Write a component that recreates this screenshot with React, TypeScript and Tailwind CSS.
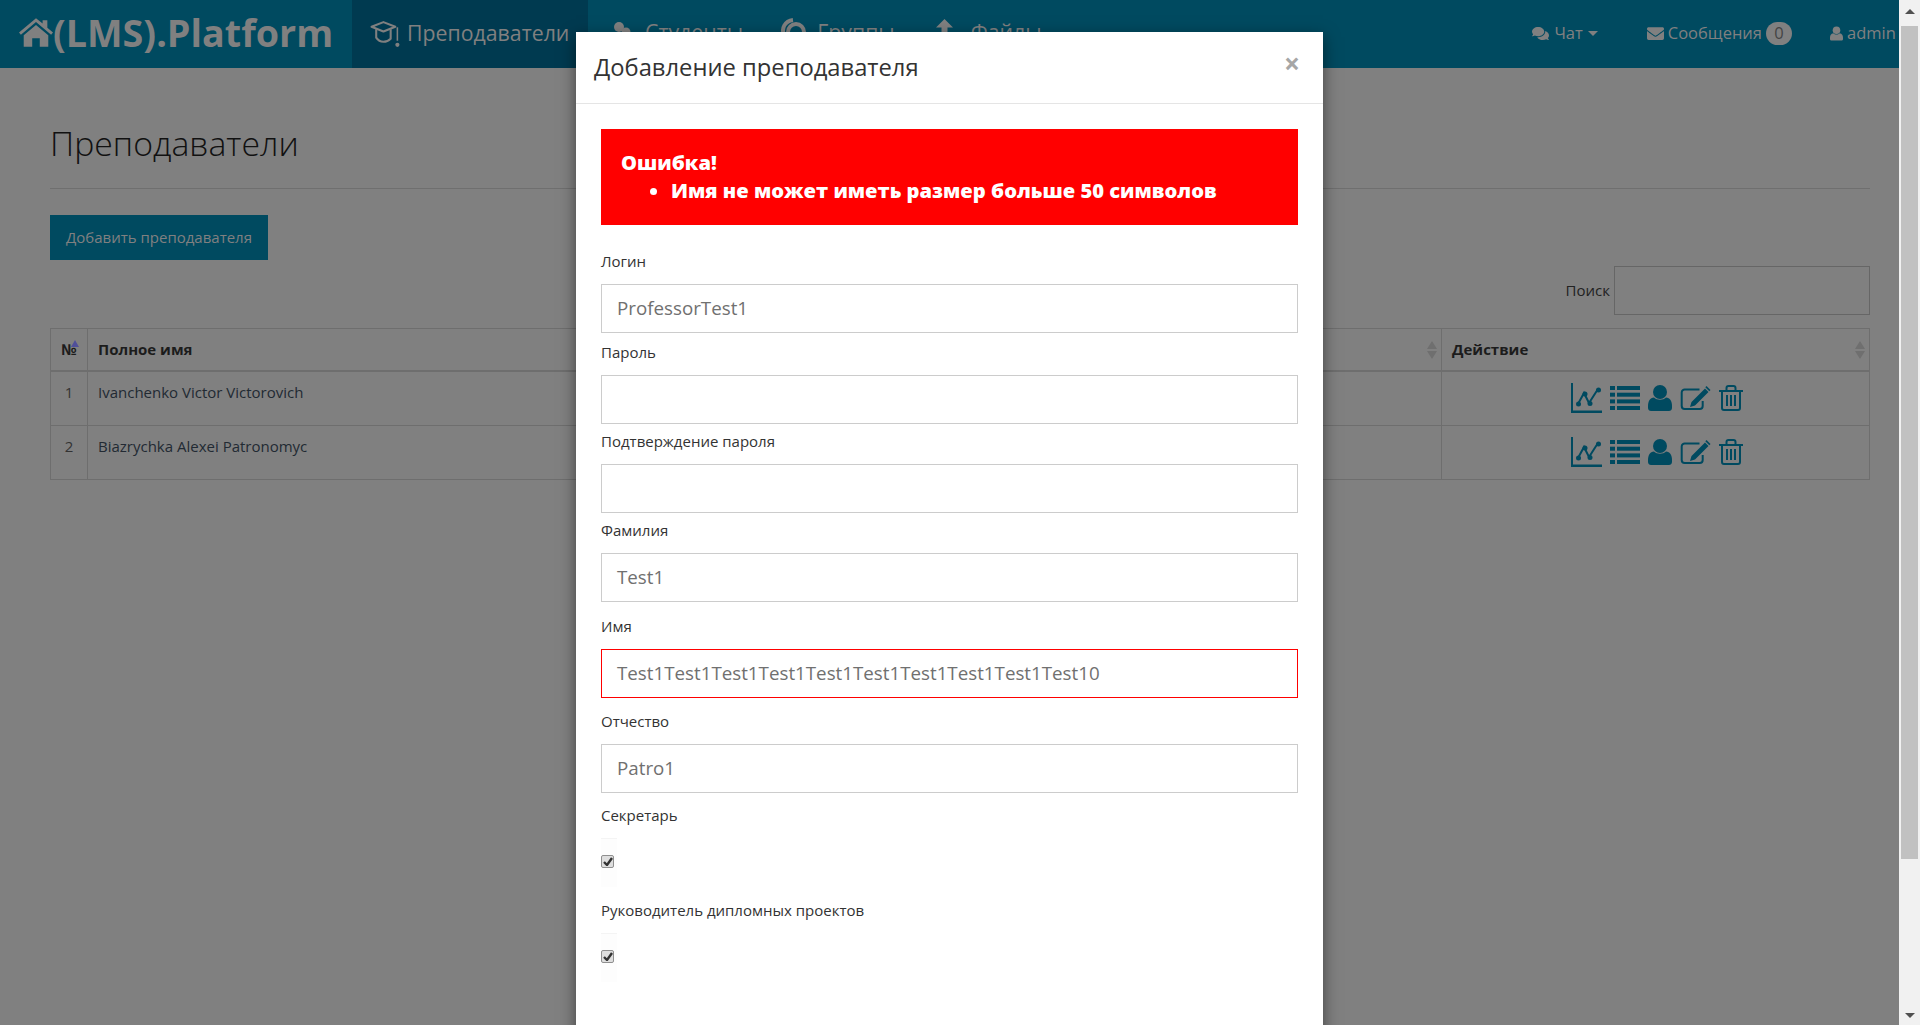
import React from "react";
import { FaComments, FaEnvelope } from "react-icons/fa";

const teal = "#004a60";

function ChartIcon() {
  return (
    <svg width="31" height="30" viewBox="0 0 31 30" className="shrink-0">
      <path d="M0 0h2v27.5h29V30H0z" fill={teal} />
      <path d="M7 21l6-11 5 10 9-14" fill="none" stroke={teal} strokeWidth="2" />
      <circle cx="7.5" cy="21" r="2.5" fill={teal} />
      <circle cx="14" cy="11" r="2.5" fill={teal} />
      <circle cx="19" cy="20.5" r="2.5" fill={teal} />
      <circle cx="27.5" cy="7" r="2.5" fill={teal} />
    </svg>
  );
}
function ListIcon() {
  return (
    <svg width="30" height="24" viewBox="0 0 30 24" className="shrink-0" fill={teal}>
      <rect x="0" y="0" width="5" height="4" />
      <rect x="7" y="0" width="23" height="4" />
      <rect x="0" y="6.7" width="5" height="4" />
      <rect x="7" y="6.7" width="23" height="4" />
      <rect x="0" y="13.4" width="5" height="4" />
      <rect x="7" y="13.4" width="23" height="4" />
      <rect x="0" y="20" width="5" height="4" />
      <rect x="7" y="20" width="23" height="4" />
    </svg>
  );
}
function UserIcon({ w = 24, h = 26, c = teal, cls = "shrink-0" }: { w?: number; h?: number; c?: string; cls?: string }) {
  return (
    <svg width={w} height={h} viewBox="0 0 24 26" className={cls} fill={c}>
      <circle cx="12" cy="7" r="7" />
      <path d="M6 12.5c3 3 9 3 12 0 4 .5 6 3.500 6 8.500v2c0 2-1.500 3-3 3H3c-1.500 0-3-1-3-3v-2c0-5 2-8 6-8.500z" />
    </svg>
  );
}
function EditIcon() {
  return (
    <svg width="31" height="24" viewBox="0 0 30 24" className="shrink-0">
      <path d="M19 3.500H4.500A3 3 0 0 0 1.200 6.500v13.500a3 3 0 0 0 3 3h15a3 3 0 0 0 3-3v-5" fill="none" stroke={teal} strokeWidth="2" />
      <path d="M24.500 2.500L11 16l-1.500 5 5-1.500L28 6zM26 0l4 4-1.200 1.200-4-4z" fill={teal} />
    </svg>
  );
}
function TrashIcon() {
  return (
    <svg width="24" height="26" viewBox="0 0 24 26" className="shrink-0" fill="none" stroke={teal} strokeWidth="2">
      <path d="M0 6h24" />
      <path d="M3 6v17a2 2 0 0 0 2 2h14a2 2 0 0 0 2-2V6" />
      <path d="M7.500 5.500V3a2 2 0 0 1 2-2h5a2 2 0 0 1 2 2v2.500" />
      <path d="M8 10v11M12 10v11M16 10v11" />
    </svg>
  );
}
function HomeIcon() {
  return (
    <svg width="34" height="29" viewBox="0 0 36 30" fill="#808080" className="shrink-0">
      <path d="M18 0L0 15l2 2.500L18 4l16 13.500 2-2.500-6-5V2h-5v3.500z" />
      <path d="M18 7L5 18v12h9v-9h8v9h9V18z" />
    </svg>
  );
}
function CapIcon() {
  return (
    <svg width="31" height="27" viewBox="0 0 30 26" fill="none" stroke="#808080" strokeWidth="2" className="shrink-0">
      <path d="M13 2L1.500 6.500 13 11l11.500-4.500z" strokeLinejoin="round" />
      <path d="M6 9v8c2 3 4 4 7 4s5-1 7-3V9" />
      <circle cx="26.500" cy="24" r="2" fill="#808080" stroke="none" />
      <path d="M26.500 7v13" strokeWidth="1.500" />
    </svg>
  );
}
function SortArrows() {
  return (
    <span className="absolute right-[4px] top-[12px] flex flex-col gap-[2px]">
      <span className="w-0 h-0 border-x-[5px] border-x-transparent border-b-[8px] border-b-[#6f6f6f]" />
      <span className="w-0 h-0 border-x-[5px] border-x-transparent border-t-[8px] border-t-[#6f6f6f]" />
    </span>
  );
}
function ActionIcons() {
  return (
    <div className="flex items-center justify-center gap-[8px] h-[30px] ml-[2px]">
      <ChartIcon />
      <ListIcon />
      <UserIcon />
      <EditIcon />
      <TrashIcon />
    </div>
  );
}
function Row({ n, name }: { n: number; name: string }) {
  return (
    <div className="flex h-[54px] border-b border-[#6e6e6e] leading-[20px]">
      <div className="w-[37px] border-r border-[#6e6e6e] text-center pt-[10px] text-[#333]">{n}</div>
      <div className="flex-1 px-[10px] pt-[10px] text-[#222a33]">{name}</div>
      <div className="w-[428px] border-l border-[#6e6e6e] pt-[11px]">
        <ActionIcons />
      </div>
    </div>
  );
}
function Field({ label, value, top, error }: { label: string; value: string; top: string; error?: boolean }) {
  return (
    <div className={top}>
      <label className="block text-[15px] leading-[20px] text-[#333] mb-[13px]">{label}</label>
      <div
        className={`h-[49px] border px-[15px] flex items-center text-[18.75px] text-[#707070] ${error ? "border-[#ff0000]" : "border-[#ccc]"}`}
      >
        {value}
      </div>
    </div>
  );
}
function Check({ label, top }: { label: string; top: string }) {
  return (
    <div className={top}>
      <div className="text-[15px] leading-[20px] text-[#333]">{label}</div>
      <div className="mt-[13px] w-[16px] h-[49px] border-t border-[#f4f4f4] bg-[#fdfdfd] pt-[16px]">
        <span className="w-[13px] h-[13px] rounded-[2px] border border-[#8f8f8f] bg-[#dedede] flex items-center justify-center">
          <svg width="10" height="9" viewBox="0 0 10 9">
            <path d="M1 5l3 3 5-7" fill="none" stroke="#333" strokeWidth="2.400" />
          </svg>
        </span>
      </div>
    </div>
  );
}

export default function App() {
  return (
    <div className="flex h-[1025px] w-[1920px] overflow-hidden bg-[#808080] text-[15px] font-['Open_Sans',sans-serif] relative">
      <div className="w-[1899px] shrink-0 relative">
        <header className="h-[68px] bg-[#004a60] flex items-center text-[#808080] overflow-hidden">
          <div className="flex items-center pl-[19px] w-[352px] font-bold text-[37.7px] whitespace-nowrap pb-[2px]">
            <HomeIcon />
            <span>(LMS).Platform</span>
          </div>
          <div className="h-[68px] w-[236px] bg-[#003a50] flex items-center pl-[18px] gap-[6px] text-[21.3px] pb-[2px]">
            <CapIcon />
            <span>Преподаватели</span>
          </div>
          <div className="flex items-center text-[21.3px] ml-[25px] pb-[4px]">
            <svg width="18" height="20" viewBox="0 0 18 20" fill="#808080" className="shrink-0"><circle cx="6" cy="5" r="5" /><circle cx="13" cy="10" r="4.500" /><path d="M0 18c0-5 3-7 6-7s6 2 6 7zM10 18c0-4 2-5 4-5s4 1 4 5z" /></svg>
            <span className="ml-[14px]">Студенты</span>
            <svg width="26" height="26" viewBox="0 0 26 26" fill="none" stroke="#808080" strokeWidth="4" className="shrink-0 ml-[38px] mb-[2px]"><circle cx="15" cy="14" r="8" /><path d="M3 18C0 10 4 3 12 2" /></svg>
            <span className="ml-[10px]">Группы</span>
            <svg width="17" height="26" viewBox="0 0 17 26" fill="#808080" className="shrink-0 ml-[41px]"><path d="M8.500 0L17 8.500h-5.500V26h-6V8.500H0z" /></svg>
            <span className="ml-[18px]">Файлы</span>
          </div>
          <div className="flex-1 flex items-center justify-end h-full text-[16.5px] pb-[2px]">
            <span className="flex items-center mr-[49px]">
              <FaComments size={17} color="#808080" className="mr-[5px]" />
              Чат
              <span className="ml-[5px] w-0 h-0 border-x-[5px] border-x-transparent border-t-[5px] border-t-[#808080]" />
            </span>
            <span className="flex items-center mr-[38px]">
              <FaEnvelope size={17} color="#808080" className="mr-[4px]" />
              Сообщения
              <span className="ml-[4px] w-[26px] h-[23px] rounded-[12px] bg-[#808080] text-[#444] flex items-center justify-center">0</span>
            </span>
            <span className="flex items-center gap-[4px] w-[69px] whitespace-nowrap overflow-hidden">
              <UserIcon w={13} h={15} c="#808080" />
              admin
              <span className="shrink-0 ml-[3px] w-0 h-0 border-x-[5px] border-x-transparent border-t-[5px] border-t-[#808080]" />
            </span>
          </div>
        </header>

        <main className="pl-[50px] pr-[29px]">
          <h1 className="mt-[57px] text-[33.8px] leading-[36px] text-[#111] font-light border-b border-[#6f6f6f] pb-[27px]">Преподаватели</h1>
          <button className="mt-[26px] h-[45px] w-[218px] bg-[#004a60] text-[#808080] text-[15px] block">Добавить преподавателя</button>
          <div className="mt-[6px] h-[49px] flex justify-end items-center gap-[4px]">
            <span className="text-[#222]">Поиск</span>
            <div className="w-[256px] h-[49px] border border-[#666]" />
          </div>
          <div className="mt-[13px] border-x border-t border-[#6e6e6e]">
            <div className="flex h-[43px] border-b-2 border-[#6e6e6e] font-bold text-[#1c1c1c] leading-[20px]">
              <div className="w-[37px] border-r border-[#6e6e6e] text-center pt-[10px] relative">
                №
                <span className="absolute right-[8px] top-[11px] w-0 h-0 border-x-[4px] border-x-transparent border-b-[7px] border-b-[#4f4f9a]" />
              </div>
              <div className="flex-1 px-[10px] pt-[10px] relative">
                Полное имя
                <SortArrows />
              </div>
              <div className="w-[428px] border-l border-[#6e6e6e] px-[10px] pt-[10px] relative">
                Действие
                <SortArrows />
              </div>
            </div>
            <Row n={1} name="Ivanchenko Victor Victorovich" />
            <Row n={2} name="Biazrychka Alexei Patronomyc" />
          </div>
        </main>

        <section className="absolute left-[576px] top-[32px] w-[747px] h-[1100px] bg-white shadow-[0_5px_15px_rgba(0,0,0,0.5)]">
          <div className="relative h-[72px] border-b border-[#e5e5e5] px-[18px] pt-[19px] text-[23.75px] leading-[32px] text-[#333] font-normal">
            Добавление преподавателя
            <span className="absolute right-[23px] top-[15px] text-[28px] leading-[32px] font-bold text-[#a6a6a6]">×</span>
          </div>
          <div className="px-[25px] pt-[25px]">
            <div className="h-[96px] bg-[#ff0000] text-white font-extrabold text-[20.15px] leading-[28px] px-[20px] pt-[19px]">
              <div>Ошибка!</div>
              <ul className="list-disc pl-[50px]">
                <li>Имя не может иметь размер больше 50 символов</li>
              </ul>
            </div>
            <Field label="Логин" value="ProfessorTest1" top="mt-[26px]" />
            <Field label="Пароль" value="" top="mt-[9px]" />
            <Field label="Подтверждение пароля" value="" top="mt-[7px]" />
            <Field label="Фамилия" value="Test1" top="mt-[7px]" />
            <Field label="Имя" value="Test1Test1Test1Test1Test1Test1Test1Test1Test1Test10" top="mt-[14px]" error />
            <Field label="Отчество" value="Patro1" top="mt-[13px]" />
            <Check label="Секретарь" top="mt-[12px]" />
            <Check label="Руководитель дипломных проектов" top="mt-[13px]" />
          </div>
        </section>
      </div>

      <aside className="w-[21px] shrink-0 bg-[#f1f1f1] flex flex-col items-center relative">
        <span className="absolute top-[9px] w-0 h-0 border-x-[5px] border-x-transparent border-b-[5px] border-b-[#505050]" />
        <div className="mt-[26px] w-[17px] h-[833px] bg-[#c1c1c1]" />
        <span className="absolute bottom-[7px] w-0 h-0 border-x-[5px] border-x-transparent border-t-[5px] border-t-[#505050]" />
      </aside>
    </div>
  );
}
